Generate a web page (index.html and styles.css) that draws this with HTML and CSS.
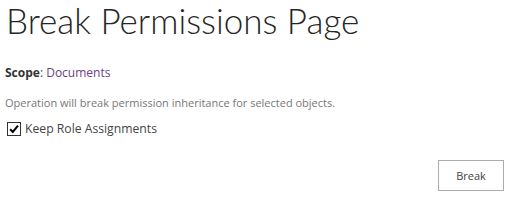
FILE: index.html
```html
<!DOCTYPE html>
<html lang="en">
<head>
  <meta charset="UTF-8">
  <title>Break Permissions Page</title>
  <link rel="stylesheet" href="styles.css">
</head>
<body>
  <section class="page">
    <h1 class="page-title">Break Permissions Page</h1>
    <div class="scope"><b>Scope</b>: <a href="#" class="scope-link">Documents</a></div>
    <p class="description">Operation will break permission inheritance for selected objects.</p>
    <label class="keep-roles">
      <input type="checkbox" checked>
      <span>Keep Role Assignments</span>
    </label>
    <div class="actions">
      <button class="btn">Break</button>
    </div>
  </section>
</body>
</html>
```

FILE: styles.css
```css
body {
  margin: 0;
  background: #fff;
  font-family: "Open Sans", "Noto Sans", sans-serif;
  color: #333;
}

.page {
  padding: 0 10px 0 5px;
}

.page-title {
  margin: 0 0 0 1px;
  font-family: Lato, "Open Sans", sans-serif;
  font-size: 35px;
  font-weight: 300;
  color: #262626;
  line-height: 40px;
}

.scope {
  margin-top: 24px;
  font-size: 12px;
  color: #444;
}

.scope b {
  color: #333;
}

.scope-link {
  color: #6a3e8a;
  text-decoration: none;
}

.description {
  margin: 14px 0 0;
  font-size: 11px;
  color: #777;
}

.keep-roles {
  display: flex;
  align-items: center;
  gap: 4px;
  margin-top: 10px;
  font-size: 12.2px;
  color: #444;
}

.keep-roles input {
  appearance: none;
  margin: 0 0 0 2px;
  width: 14px;
  height: 14px;
  border: 1px solid #333;
  background: #fff url("data:image/svg+xml,%3Csvg xmlns='http://www.w3.org/2000/svg' viewBox='0 0 12 12'%3E%3Cpath d='M2.2 6.2 L4.8 9 L10 2.6' fill='none' stroke='%23000' stroke-width='2'/%3E%3C/svg%3E") center/12px 12px no-repeat;
}

.actions {
  display: flex;
  justify-content: flex-end;
  margin-top: 23px;
}

.btn {
  width: 66px;
  height: 31px;
  background: #fff;
  border: 1px solid #ababab;
  font: 11px "Open Sans", sans-serif;
  color: #444;
}
```
